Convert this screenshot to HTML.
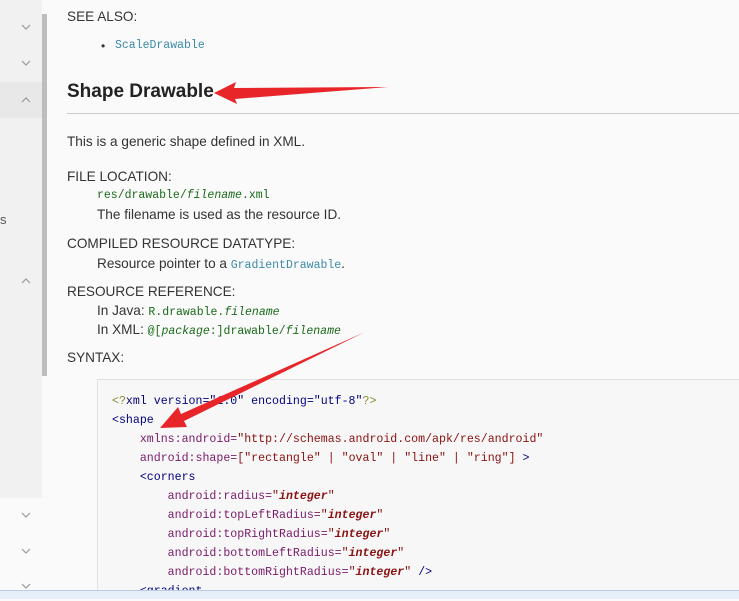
<!DOCTYPE html>
<html><head><meta charset="utf-8"><style>
body{margin:0;width:739px;height:598px;overflow:hidden;background:#fafafa;font-family:"Liberation Sans",sans-serif;color:#333;position:relative}
.a{position:absolute;white-space:nowrap}
.t{font-size:13.6px}
.m{font-family:"Liberation Mono",monospace;font-size:11.5px}
.g{color:#1a6a1a}
.l{color:#3a8aa8}
pre.a{margin:0;font-family:"Liberation Mono",monospace;font-size:11.6px;line-height:19px;white-space:pre}
.k{color:#000080}.p{color:#7a1a6a}.s{color:#8b1010}.i{font-style:italic;font-weight:bold;color:#8b1010}.o{color:#8a8a30}
</style></head><body>
<div class="a" style="left:0;top:0;width:42px;height:498px;background:#f1f1f1"></div>
<div class="a" style="left:0;top:82px;width:42px;height:36px;background:#e8e8e8"></div>
<div class="a" style="left:42px;top:14px;width:5px;height:362px;background:#bdbdbd"></div>
<div class="a" style="left:0;top:212px;font-size:13px;color:#555">s</div>
<svg class="a" style="left:0;top:0" width="42" height="598">
<g fill="none" stroke="#999" stroke-width="1.2">
<path d="M22 25l4 4 4-4"/><path d="M22 61l4 4 4-4"/><path d="M22 102l4-4 4 4"/><path d="M22 283l4-4 4 4"/>
<path d="M22 513l4 4 4-4"/><path d="M22 549l4 4 4-4"/><path d="M22 584l4 4 4-4"/></g></svg>
<div class="a t" style="left:67px;top:9px">SEE ALSO:</div>
<div class="a" style="left:101px;top:39px;font-size:12px">•</div>
<div class="a m l" style="left:115px;top:39px">ScaleDrawable</div>
<div class="a" style="left:67px;top:81px;font-size:19px;font-weight:bold;color:#222">Shape Drawable</div>
<div class="a" style="left:67px;top:113px;width:672px;height:1px;background:#ccc"></div>
<div class="a t" style="left:67px;top:134px">This is a generic shape defined in XML.</div>
<div class="a t" style="left:67px;top:169px">FILE LOCATION:</div>
<div class="a m g" style="left:97px;top:189px">res/drawable/<i>filename</i>.xml</div>
<div class="a t" style="left:97px;top:207px">The filename is used as the resource ID.</div>
<div class="a t" style="left:67px;top:236px">COMPILED RESOURCE DATATYPE:</div>
<div class="a t" style="left:97px;top:256px">Resource pointer to a <span class="m l">GradientDrawable</span>.</div>
<div class="a t" style="left:67px;top:284px">RESOURCE REFERENCE:</div>
<div class="a t" style="left:97px;top:303px">In Java: <span class="m g">R.drawable.<i>filename</i></span></div>
<div class="a t" style="left:97px;top:322px">In XML: <span class="m g">@[<i>package</i>:]drawable/<i>filename</i></span></div>
<div class="a t" style="left:67px;top:350px">SYNTAX:</div>
<div class="a" style="left:97px;top:379px;width:642px;height:219px;background:#f7f7f7;border-left:1px solid #e0e0e0;border-top:1px solid #e0e0e0"></div>
<pre class="a" style="left:112px;top:392px"><span class="o">&lt;?</span><span class="k">xml version="1.0" encoding="utf-8"</span><span class="o">?&gt;</span>
<span class="k">&lt;shape</span>
    <span class="p">xmlns:android=</span><span class="s">"http://schemas.android.com/apk/res/android"</span>
    <span class="p">android:shape=</span><span class="s">["rectangle" | "oval" | "line" | "ring"]</span> <span class="k">&gt;</span>
    <span class="k">&lt;corners</span>
        <span class="p">android:radius=</span><span class="s">"</span><span class="i">integer</span><span class="s">"</span>
        <span class="p">android:topLeftRadius=</span><span class="s">"</span><span class="i">integer</span><span class="s">"</span>
        <span class="p">android:topRightRadius=</span><span class="s">"</span><span class="i">integer</span><span class="s">"</span>
        <span class="p">android:bottomLeftRadius=</span><span class="s">"</span><span class="i">integer</span><span class="s">"</span>
        <span class="p">android:bottomRightRadius=</span><span class="s">"</span><span class="i">integer</span><span class="s">"</span> <span class="k">/&gt;</span>
    <span class="k">&lt;gradient</span></pre>
<div class="a" style="left:0;top:590px;width:739px;height:8px;background:#e6eefa;border-top:1px solid #b8cce8"></div>
<svg class="a" style="left:0;top:0" width="739" height="598">
<polygon fill="#e8262a" points="214,93 236,82 234,88 388,87 235,99 237,104"/>
<polygon fill="#e8262a" points="160,428 178,407 181,414 365,332 184,421 187,427"/>
</svg>
</body></html>
